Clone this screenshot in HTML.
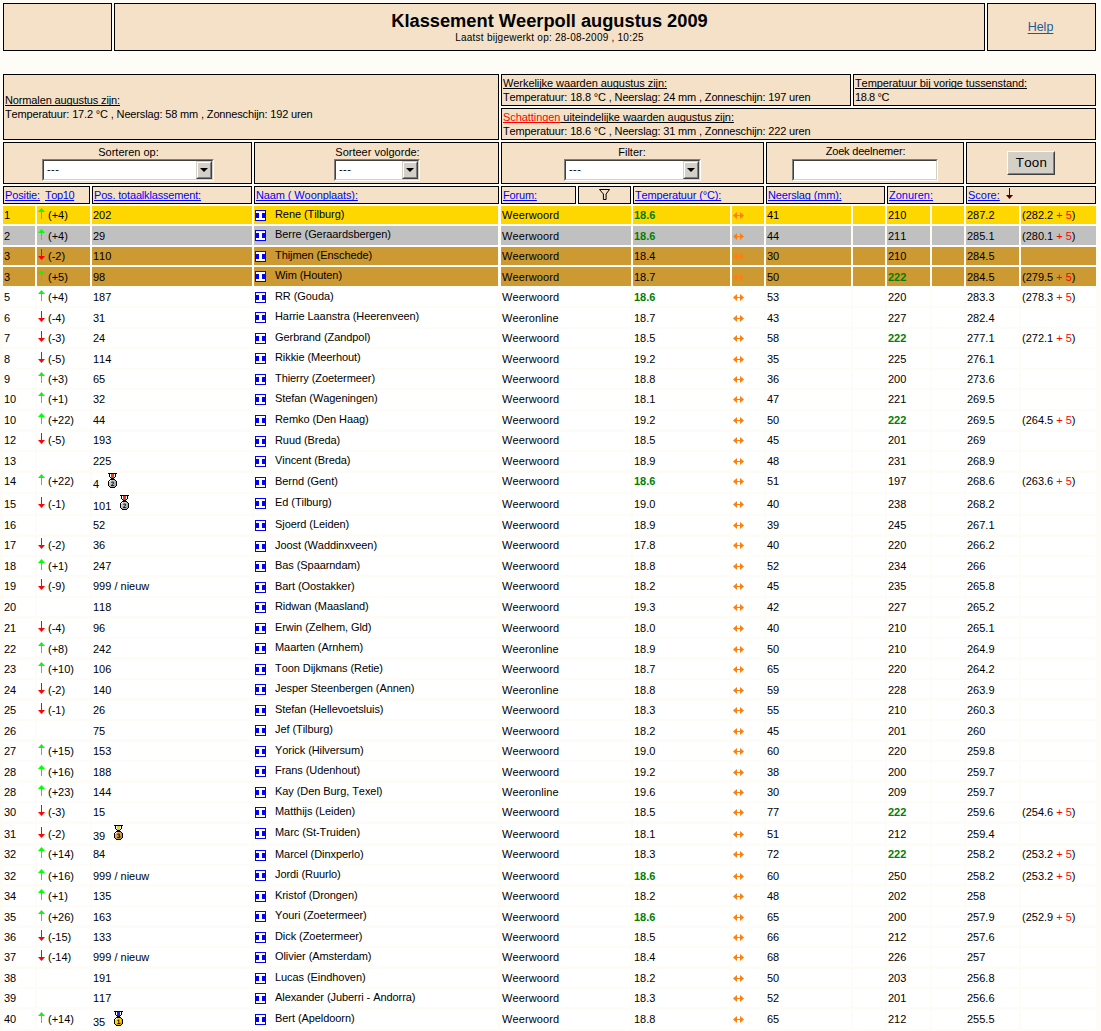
<!DOCTYPE html>
<html lang="nl"><head><meta charset="utf-8"><title>Klassement Weerpoll augustus 2009</title>
<style>
html,body{margin:0;padding:0;}
body{background:#FDFCF6;font-family:"Liberation Sans",Arial,sans-serif;font-size:11px;color:#000;font-kerning:none;}
#pg{position:relative;width:1101px;height:1031px;overflow:hidden;background:#FDFCF6;}
.b{position:absolute;box-sizing:border-box;border:1px solid #000;background:#F5E1C8;}
.t{position:absolute;white-space:nowrap;line-height:13px;}
a{color:#0000FF;text-decoration:underline;text-decoration-skip-ink:none;}
u{text-decoration:underline;text-decoration-skip-ink:none;}
.r{position:absolute;left:0;width:1101px;}
.r div{position:absolute;top:0;height:100%;background:#FFF;white-space:nowrap;overflow:hidden;box-sizing:border-box;padding-left:1px;}
.r.g div{background:#FFD700;}
.r.s div{background:#C0C0C0;}
.r.z div{background:#CC9933;}
.gr{color:#008000;font-weight:bold;}
.rd{color:#FF0000;}
svg{position:absolute;overflow:visible;}
.sel{position:absolute;box-sizing:border-box;background:#FFF;border:1px solid;border-color:#808080 #FFF #FFF #808080;}
.sel i{position:absolute;left:0;top:0;right:0;bottom:0;border:1px solid;border-color:#404040 #D4D0C8 #D4D0C8 #404040;}
.sel b{position:absolute;right:1px;top:1px;bottom:1px;width:16px;background:#D4D0C8;box-sizing:border-box;border:1px solid;border-color:#D4D0C8 #404040 #404040 #D4D0C8;}
.sel b:before{content:"";position:absolute;left:0;top:0;right:0;bottom:0;border:1px solid;border-color:#FFF #808080 #808080 #FFF;}
.sel b:after{content:"";position:absolute;left:3px;top:6px;border:4px solid transparent;border-top:4px solid #000;border-bottom:0;}
.sel span{position:absolute;left:4px;top:3px;line-height:13px;font-size:11px;letter-spacing:0.4px;}
.btn{position:absolute;box-sizing:border-box;background:#D4D0C8;border:1px solid;border-color:#FFF #404040 #404040 #FFF;font-size:13.33px;text-align:center;}
.btn:before{content:"";position:absolute;left:0;top:0;right:0;bottom:0;border:1px solid;border-color:#D4D0C8 #808080 #808080 #D4D0C8;}
</style></head><body><div id="pg">
<div class="b" style="left:3px;top:3px;width:109px;height:48px"></div>
<div class="b" style="left:114px;top:3px;width:871px;height:48px"></div>
<div class="b" style="left:987px;top:3px;width:109px;height:48px"></div>
<span class="t" style="left:114px;width:871px;text-align:center;top:10px;font-size:18.26px;font-weight:bold;line-height:21px;">Klassement Weerpoll augustus 2009</span>
<span class="t" style="left:114px;width:871px;text-align:center;top:32px;font-size:10px;line-height:12px;letter-spacing:0.24px;">Laatst bijgewerkt op: 28-08-2009 , 10:25</span>
<span class="t" style="left:987px;width:109px;text-align:center;top:20px;font-size:12.5px;line-height:15px;margin-left:-1px"><a style="color:#1E5A9E;text-underline-offset:2px">Help</a></span>
<div class="b" style="left:3px;top:74px;width:496px;height:66px"></div>
<div class="b" style="left:501px;top:74px;width:350px;height:32px"></div>
<div class="b" style="left:853px;top:74px;width:243px;height:32px"></div>
<div class="b" style="left:501px;top:108px;width:595px;height:32px"></div>
<span class="t" style="left:5px;top:94px;letter-spacing:-0.13px;"><u>Normalen augustus zijn:</u></span>
<span class="t" style="left:5px;top:108px;letter-spacing:-0.15px;">Temperatuur: 17.2 °C , Neerslag: 58 mm , Zonneschijn: 192 uren</span>
<span class="t" style="left:503px;top:77px;letter-spacing:-0.07px;"><u>Werkelijke waarden augustus zijn:</u></span>
<span class="t" style="left:503px;top:91px;letter-spacing:-0.15px;">Temperatuur: 18.8 °C , Neerslag: 24 mm , Zonneschijn: 197 uren</span>
<span class="t" style="left:855px;top:77px;letter-spacing:-0.1px;"><u>Temperatuur bij vorige tussenstand:</u></span>
<span class="t" style="left:855px;top:91px;letter-spacing:-0.4px;">18.8 °C</span>
<span class="t" style="left:503px;top:111px;letter-spacing:-0.07px;"><a style="color:#FF0000">Schattingen</a><u> uiteindelijke waarden augustus zijn:</u></span>
<span class="t" style="left:503px;top:125px;letter-spacing:-0.15px;">Temperatuur: 18.6 °C , Neerslag: 31 mm , Zonneschijn: 222 uren</span>
<div class="b" style="left:3px;top:142px;width:249px;height:42px"></div>
<div class="b" style="left:254px;top:142px;width:245px;height:42px"></div>
<div class="b" style="left:501px;top:142px;width:263px;height:42px"></div>
<div class="b" style="left:766px;top:142px;width:198px;height:42px"></div>
<div class="b" style="left:966px;top:142px;width:130px;height:42px"></div>
<span class="t" style="left:-71.5px;width:400px;text-align:center;top:146px;">Sorteren op:</span>
<span class="t" style="left:177.5px;width:400px;text-align:center;top:146px;">Sorteer volgorde:</span>
<span class="t" style="left:432px;width:400px;text-align:center;top:146px;">Filter:</span>
<span class="t" style="left:665.5px;width:400px;text-align:center;top:145px;letter-spacing:-0.2px;">Zoek deelnemer:</span>
<div class="sel" style="left:42px;top:159px;width:172px;height:22px"><i></i><span>---</span><b></b></div>
<div class="sel" style="left:334px;top:159px;width:86px;height:22px"><i></i><span>---</span><b></b></div>
<div class="sel" style="left:564px;top:159px;width:137px;height:22px"><i></i><span>---</span><b></b></div>
<div class="sel" style="left:792px;top:159px;width:146px;height:22px"><i></i></div>
<div class="btn" style="left:1007px;top:151px;width:48px;height:24px;line-height:21px;letter-spacing:0.3px;padding-left:1px">Toon</div>
<div class="b" style="left:3px;top:186px;width:87px;height:18px"></div>
<div class="b" style="left:92px;top:186px;width:160px;height:18px"></div>
<div class="b" style="left:254px;top:186px;width:245px;height:18px"></div>
<div class="b" style="left:501px;top:186px;width:75px;height:18px"></div>
<div class="b" style="left:578px;top:186px;width:53px;height:18px"></div>
<div class="b" style="left:633px;top:186px;width:131px;height:18px"></div>
<div class="b" style="left:766px;top:186px;width:119px;height:18px"></div>
<div class="b" style="left:887px;top:186px;width:77px;height:18px"></div>
<div class="b" style="left:966px;top:186px;width:130px;height:18px"></div>
<span class="t" style="left:5px;top:189px;letter-spacing:-0.13px;"><a>Positie:</a></span>
<span class="t" style="left:45px;top:189px;letter-spacing:-0.4px;"><a>Top10</a></span>
<span class="t" style="left:94px;top:189px;letter-spacing:-0.17px;"><a>Pos. totaalklassement:</a></span>
<span class="t" style="left:256px;top:189px;letter-spacing:-0.11px;"><a>Naam ( Woonplaats):</a></span>
<span class="t" style="left:503px;top:189px;letter-spacing:-0.17px;"><a>Forum:</a></span>
<span class="t" style="left:635px;top:189px;letter-spacing:-0.15px;"><a>Temperatuur (°C):</a></span>
<span class="t" style="left:768px;top:189px;letter-spacing:-0.16px;"><a>Neerslag (mm):</a></span>
<span class="t" style="left:889px;top:189px;"><a>Zonuren:</a></span>
<span class="t" style="left:968px;top:189px;"><a>Score:</a></span>
<svg style="left:1006px;top:188px" width="7" height="11" viewBox="0 0 7 11"><path d="M3.5 11L7 7H4V0H3V7H0Z" fill="#4B0000"/></svg>
<svg style="left:598px;top:188px" width="14" height="13" viewBox="0 0 14 13"><path d="M1.5 1.5H11.5L8.1 6V11.5H5.4V6Z" fill="none" stroke="#000" stroke-width="1" stroke-linejoin="miter"/></svg>
<div class="r g" style="top:206px;height:18px"><div style="left:3px;width:32px"><span class="t" style="left:1px;top:3px;">1</span></div><div style="left:37px;width:53px"><svg style="left:1px;top:2px" width="7" height="11" viewBox="0 0 7 11"><path d="M3.5 0L7 4H4V11H3V4H0Z" fill="#00FF00"/></svg><span class="t" style="left:11px;top:3px">(+4)</span></div><div style="left:92px;width:160px"><span class="t" style="left:1px;top:3px">202</span></div><div style="left:254px;width:244px"><svg style="left:1px;top:4px" width="11" height="11" viewBox="0 0 11 11"><rect width="11" height="11" fill="#0000FF"/><path d="M1 1H10V3H7V8H10V10H1V8H4V3H1Z" fill="#FFF"/></svg><span class="t" style="left:21px;top:2px;letter-spacing:-0.07px">Rene (Tilburg)</span></div><div style="left:501px;width:130px"><span class="t" style="left:1px;top:3px;letter-spacing:0.12px;">Weerwoord</span></div><div style="left:633px;width:97px"><span class="t" style="left:1px;top:3px;"><span class="gr">18.6</span></span></div><div style="left:732px;width:32px"><svg style="left:1px;top:6px" width="11" height="7" viewBox="0 0 11 7"><path d="M0 3.5L4 0V3H7V0L11 3.5L7 7V4H4V7Z" fill="#FF7F0E"/></svg></div><div style="left:766px;width:85px"><span class="t" style="left:1px;top:3px;">41</span></div><div style="left:853px;width:32px"></div><div style="left:887px;width:43px"><span class="t" style="left:1px;top:3px;">210</span></div><div style="left:932px;width:32px"></div><div style="left:966px;width:53px"><span class="t" style="left:1px;top:3px;">287.2</span></div><div style="left:1021px;width:75px"><span class="t" style="left:1px;top:3px;">(282.2 <span class="rd">+ 5</span>)</span></div></div>
<div class="r s" style="top:226px;height:19px"><div style="left:3px;width:32px"><span class="t" style="left:1px;top:4px;">2</span></div><div style="left:37px;width:53px"><svg style="left:1px;top:3px" width="7" height="11" viewBox="0 0 7 11"><path d="M3.5 0L7 4H4V11H3V4H0Z" fill="#00FF00"/></svg><span class="t" style="left:11px;top:4px">(+4)</span></div><div style="left:92px;width:160px"><span class="t" style="left:1px;top:4px">29</span></div><div style="left:254px;width:244px"><svg style="left:1px;top:4px" width="11" height="11" viewBox="0 0 11 11"><rect width="11" height="11" fill="#0000FF"/><path d="M1 1H10V3H7V8H10V10H1V8H4V3H1Z" fill="#FFF"/></svg><span class="t" style="left:21px;top:2px;letter-spacing:-0.07px">Berre (Geraardsbergen)</span></div><div style="left:501px;width:130px"><span class="t" style="left:1px;top:4px;letter-spacing:0.12px;">Weerwoord</span></div><div style="left:633px;width:97px"><span class="t" style="left:1px;top:4px;"><span class="gr">18.6</span></span></div><div style="left:732px;width:32px"><svg style="left:1px;top:7px" width="11" height="7" viewBox="0 0 11 7"><path d="M0 3.5L4 0V3H7V0L11 3.5L7 7V4H4V7Z" fill="#FF7F0E"/></svg></div><div style="left:766px;width:85px"><span class="t" style="left:1px;top:4px;">44</span></div><div style="left:853px;width:32px"></div><div style="left:887px;width:43px"><span class="t" style="left:1px;top:4px;">211</span></div><div style="left:932px;width:32px"></div><div style="left:966px;width:53px"><span class="t" style="left:1px;top:4px;">285.1</span></div><div style="left:1021px;width:75px"><span class="t" style="left:1px;top:4px;">(280.1 <span class="rd">+ 5</span>)</span></div></div>
<div class="r z" style="top:247px;height:18px"><div style="left:3px;width:32px"><span class="t" style="left:1px;top:3px;">3</span></div><div style="left:37px;width:53px"><svg style="left:1px;top:2px" width="7" height="11" viewBox="0 0 7 11"><path d="M3.5 11L7 7H4V0H3V7H0Z" fill="#FF0000"/></svg><span class="t" style="left:11px;top:3px">(-2)</span></div><div style="left:92px;width:160px"><span class="t" style="left:1px;top:3px">110</span></div><div style="left:254px;width:244px"><svg style="left:1px;top:4px" width="11" height="11" viewBox="0 0 11 11"><rect width="11" height="11" fill="#0000FF"/><path d="M1 1H10V3H7V8H10V10H1V8H4V3H1Z" fill="#FFF"/></svg><span class="t" style="left:21px;top:2px;letter-spacing:-0.07px">Thijmen (Enschede)</span></div><div style="left:501px;width:130px"><span class="t" style="left:1px;top:3px;letter-spacing:0.12px;">Weerwoord</span></div><div style="left:633px;width:97px"><span class="t" style="left:1px;top:3px;">18.4</span></div><div style="left:732px;width:32px"><svg style="left:1px;top:6px" width="11" height="7" viewBox="0 0 11 7"><path d="M0 3.5L4 0V3H7V0L11 3.5L7 7V4H4V7Z" fill="#FF7F0E"/></svg></div><div style="left:766px;width:85px"><span class="t" style="left:1px;top:3px;">30</span></div><div style="left:853px;width:32px"></div><div style="left:887px;width:43px"><span class="t" style="left:1px;top:3px;">210</span></div><div style="left:932px;width:32px"></div><div style="left:966px;width:53px"><span class="t" style="left:1px;top:3px;">284.5</span></div><div style="left:1021px;width:75px"></div></div>
<div class="r z" style="top:267px;height:19px"><div style="left:3px;width:32px"><span class="t" style="left:1px;top:4px;">3</span></div><div style="left:37px;width:53px"><svg style="left:1px;top:3px" width="7" height="11" viewBox="0 0 7 11"><path d="M3.5 0L7 4H4V11H3V4H0Z" fill="#00FF00"/></svg><span class="t" style="left:11px;top:4px">(+5)</span></div><div style="left:92px;width:160px"><span class="t" style="left:1px;top:4px">98</span></div><div style="left:254px;width:244px"><svg style="left:1px;top:4px" width="11" height="11" viewBox="0 0 11 11"><rect width="11" height="11" fill="#0000FF"/><path d="M1 1H10V3H7V8H10V10H1V8H4V3H1Z" fill="#FFF"/></svg><span class="t" style="left:21px;top:2px;letter-spacing:-0.07px">Wim (Houten)</span></div><div style="left:501px;width:130px"><span class="t" style="left:1px;top:4px;letter-spacing:0.12px;">Weerwoord</span></div><div style="left:633px;width:97px"><span class="t" style="left:1px;top:4px;">18.7</span></div><div style="left:732px;width:32px"><svg style="left:1px;top:7px" width="11" height="7" viewBox="0 0 11 7"><path d="M0 3.5L4 0V3H7V0L11 3.5L7 7V4H4V7Z" fill="#FF7F0E"/></svg></div><div style="left:766px;width:85px"><span class="t" style="left:1px;top:4px;">50</span></div><div style="left:853px;width:32px"></div><div style="left:887px;width:43px"><span class="t" style="left:1px;top:4px;"><span class="gr">222</span></span></div><div style="left:932px;width:32px"></div><div style="left:966px;width:53px"><span class="t" style="left:1px;top:4px;">284.5</span></div><div style="left:1021px;width:75px"><span class="t" style="left:1px;top:4px;">(279.5 <span class="rd">+ 5</span>)</span></div></div>
<div class="r" style="top:288px;height:18px"><div style="left:3px;width:32px"><span class="t" style="left:1px;top:3px;">5</span></div><div style="left:37px;width:53px"><svg style="left:1px;top:2px" width="7" height="11" viewBox="0 0 7 11"><path d="M3.5 0L7 4H4V11H3V4H0Z" fill="#00FF00"/></svg><span class="t" style="left:11px;top:3px">(+4)</span></div><div style="left:92px;width:160px"><span class="t" style="left:1px;top:3px">187</span></div><div style="left:254px;width:244px"><svg style="left:1px;top:4px" width="11" height="11" viewBox="0 0 11 11"><rect width="11" height="11" fill="#0000FF"/><path d="M1 1H10V3H7V8H10V10H1V8H4V3H1Z" fill="#FFF"/></svg><span class="t" style="left:21px;top:2px;letter-spacing:-0.07px">RR (Gouda)</span></div><div style="left:501px;width:130px"><span class="t" style="left:1px;top:3px;letter-spacing:0.12px;">Weerwoord</span></div><div style="left:633px;width:97px"><span class="t" style="left:1px;top:3px;"><span class="gr">18.6</span></span></div><div style="left:732px;width:32px"><svg style="left:1px;top:6px" width="11" height="7" viewBox="0 0 11 7"><path d="M0 3.5L4 0V3H7V0L11 3.5L7 7V4H4V7Z" fill="#FF7F0E"/></svg></div><div style="left:766px;width:85px"><span class="t" style="left:1px;top:3px;">53</span></div><div style="left:853px;width:32px"></div><div style="left:887px;width:43px"><span class="t" style="left:1px;top:3px;">220</span></div><div style="left:932px;width:32px"></div><div style="left:966px;width:53px"><span class="t" style="left:1px;top:3px;">283.3</span></div><div style="left:1021px;width:75px"><span class="t" style="left:1px;top:3px;">(278.3 <span class="rd">+ 5</span>)</span></div></div>
<div class="r" style="top:308px;height:19px"><div style="left:3px;width:32px"><span class="t" style="left:1px;top:4px;">6</span></div><div style="left:37px;width:53px"><svg style="left:1px;top:3px" width="7" height="11" viewBox="0 0 7 11"><path d="M3.5 11L7 7H4V0H3V7H0Z" fill="#FF0000"/></svg><span class="t" style="left:11px;top:4px">(-4)</span></div><div style="left:92px;width:160px"><span class="t" style="left:1px;top:4px">31</span></div><div style="left:254px;width:244px"><svg style="left:1px;top:4px" width="11" height="11" viewBox="0 0 11 11"><rect width="11" height="11" fill="#0000FF"/><path d="M1 1H10V3H7V8H10V10H1V8H4V3H1Z" fill="#FFF"/></svg><span class="t" style="left:21px;top:2px;letter-spacing:-0.07px">Harrie Laanstra (Heerenveen)</span></div><div style="left:501px;width:130px"><span class="t" style="left:1px;top:4px;letter-spacing:0.12px;">Weeronline</span></div><div style="left:633px;width:97px"><span class="t" style="left:1px;top:4px;">18.7</span></div><div style="left:732px;width:32px"><svg style="left:1px;top:7px" width="11" height="7" viewBox="0 0 11 7"><path d="M0 3.5L4 0V3H7V0L11 3.5L7 7V4H4V7Z" fill="#FF7F0E"/></svg></div><div style="left:766px;width:85px"><span class="t" style="left:1px;top:4px;">43</span></div><div style="left:853px;width:32px"></div><div style="left:887px;width:43px"><span class="t" style="left:1px;top:4px;">227</span></div><div style="left:932px;width:32px"></div><div style="left:966px;width:53px"><span class="t" style="left:1px;top:4px;">282.4</span></div><div style="left:1021px;width:75px"></div></div>
<div class="r" style="top:329px;height:18px"><div style="left:3px;width:32px"><span class="t" style="left:1px;top:3px;">7</span></div><div style="left:37px;width:53px"><svg style="left:1px;top:2px" width="7" height="11" viewBox="0 0 7 11"><path d="M3.5 11L7 7H4V0H3V7H0Z" fill="#FF0000"/></svg><span class="t" style="left:11px;top:3px">(-3)</span></div><div style="left:92px;width:160px"><span class="t" style="left:1px;top:3px">24</span></div><div style="left:254px;width:244px"><svg style="left:1px;top:4px" width="11" height="11" viewBox="0 0 11 11"><rect width="11" height="11" fill="#0000FF"/><path d="M1 1H10V3H7V8H10V10H1V8H4V3H1Z" fill="#FFF"/></svg><span class="t" style="left:21px;top:2px;letter-spacing:-0.07px">Gerbrand (Zandpol)</span></div><div style="left:501px;width:130px"><span class="t" style="left:1px;top:3px;letter-spacing:0.12px;">Weerwoord</span></div><div style="left:633px;width:97px"><span class="t" style="left:1px;top:3px;">18.5</span></div><div style="left:732px;width:32px"><svg style="left:1px;top:6px" width="11" height="7" viewBox="0 0 11 7"><path d="M0 3.5L4 0V3H7V0L11 3.5L7 7V4H4V7Z" fill="#FF7F0E"/></svg></div><div style="left:766px;width:85px"><span class="t" style="left:1px;top:3px;">58</span></div><div style="left:853px;width:32px"></div><div style="left:887px;width:43px"><span class="t" style="left:1px;top:3px;"><span class="gr">222</span></span></div><div style="left:932px;width:32px"></div><div style="left:966px;width:53px"><span class="t" style="left:1px;top:3px;">277.1</span></div><div style="left:1021px;width:75px"><span class="t" style="left:1px;top:3px;">(272.1 <span class="rd">+ 5</span>)</span></div></div>
<div class="r" style="top:349px;height:19px"><div style="left:3px;width:32px"><span class="t" style="left:1px;top:4px;">8</span></div><div style="left:37px;width:53px"><svg style="left:1px;top:3px" width="7" height="11" viewBox="0 0 7 11"><path d="M3.5 11L7 7H4V0H3V7H0Z" fill="#FF0000"/></svg><span class="t" style="left:11px;top:4px">(-5)</span></div><div style="left:92px;width:160px"><span class="t" style="left:1px;top:4px">114</span></div><div style="left:254px;width:244px"><svg style="left:1px;top:4px" width="11" height="11" viewBox="0 0 11 11"><rect width="11" height="11" fill="#0000FF"/><path d="M1 1H10V3H7V8H10V10H1V8H4V3H1Z" fill="#FFF"/></svg><span class="t" style="left:21px;top:2px;letter-spacing:-0.07px">Rikkie (Meerhout)</span></div><div style="left:501px;width:130px"><span class="t" style="left:1px;top:4px;letter-spacing:0.12px;">Weerwoord</span></div><div style="left:633px;width:97px"><span class="t" style="left:1px;top:4px;">19.2</span></div><div style="left:732px;width:32px"><svg style="left:1px;top:7px" width="11" height="7" viewBox="0 0 11 7"><path d="M0 3.5L4 0V3H7V0L11 3.5L7 7V4H4V7Z" fill="#FF7F0E"/></svg></div><div style="left:766px;width:85px"><span class="t" style="left:1px;top:4px;">35</span></div><div style="left:853px;width:32px"></div><div style="left:887px;width:43px"><span class="t" style="left:1px;top:4px;">225</span></div><div style="left:932px;width:32px"></div><div style="left:966px;width:53px"><span class="t" style="left:1px;top:4px;">276.1</span></div><div style="left:1021px;width:75px"></div></div>
<div class="r" style="top:370px;height:18px"><div style="left:3px;width:32px"><span class="t" style="left:1px;top:3px;">9</span></div><div style="left:37px;width:53px"><svg style="left:1px;top:2px" width="7" height="11" viewBox="0 0 7 11"><path d="M3.5 0L7 4H4V11H3V4H0Z" fill="#00FF00"/></svg><span class="t" style="left:11px;top:3px">(+3)</span></div><div style="left:92px;width:160px"><span class="t" style="left:1px;top:3px">65</span></div><div style="left:254px;width:244px"><svg style="left:1px;top:4px" width="11" height="11" viewBox="0 0 11 11"><rect width="11" height="11" fill="#0000FF"/><path d="M1 1H10V3H7V8H10V10H1V8H4V3H1Z" fill="#FFF"/></svg><span class="t" style="left:21px;top:2px;letter-spacing:-0.07px">Thierry (Zoetermeer)</span></div><div style="left:501px;width:130px"><span class="t" style="left:1px;top:3px;letter-spacing:0.12px;">Weerwoord</span></div><div style="left:633px;width:97px"><span class="t" style="left:1px;top:3px;">18.8</span></div><div style="left:732px;width:32px"><svg style="left:1px;top:6px" width="11" height="7" viewBox="0 0 11 7"><path d="M0 3.5L4 0V3H7V0L11 3.5L7 7V4H4V7Z" fill="#FF7F0E"/></svg></div><div style="left:766px;width:85px"><span class="t" style="left:1px;top:3px;">36</span></div><div style="left:853px;width:32px"></div><div style="left:887px;width:43px"><span class="t" style="left:1px;top:3px;">200</span></div><div style="left:932px;width:32px"></div><div style="left:966px;width:53px"><span class="t" style="left:1px;top:3px;">273.6</span></div><div style="left:1021px;width:75px"></div></div>
<div class="r" style="top:390px;height:19px"><div style="left:3px;width:32px"><span class="t" style="left:1px;top:3px;">10</span></div><div style="left:37px;width:53px"><svg style="left:1px;top:2px" width="7" height="11" viewBox="0 0 7 11"><path d="M3.5 0L7 4H4V11H3V4H0Z" fill="#00FF00"/></svg><span class="t" style="left:11px;top:3px">(+1)</span></div><div style="left:92px;width:160px"><span class="t" style="left:1px;top:3px">32</span></div><div style="left:254px;width:244px"><svg style="left:1px;top:4px" width="11" height="11" viewBox="0 0 11 11"><rect width="11" height="11" fill="#0000FF"/><path d="M1 1H10V3H7V8H10V10H1V8H4V3H1Z" fill="#FFF"/></svg><span class="t" style="left:21px;top:2px;letter-spacing:-0.07px">Stefan (Wageningen)</span></div><div style="left:501px;width:130px"><span class="t" style="left:1px;top:3px;letter-spacing:0.12px;">Weerwoord</span></div><div style="left:633px;width:97px"><span class="t" style="left:1px;top:3px;">18.1</span></div><div style="left:732px;width:32px"><svg style="left:1px;top:6px" width="11" height="7" viewBox="0 0 11 7"><path d="M0 3.5L4 0V3H7V0L11 3.5L7 7V4H4V7Z" fill="#FF7F0E"/></svg></div><div style="left:766px;width:85px"><span class="t" style="left:1px;top:3px;">47</span></div><div style="left:853px;width:32px"></div><div style="left:887px;width:43px"><span class="t" style="left:1px;top:3px;">221</span></div><div style="left:932px;width:32px"></div><div style="left:966px;width:53px"><span class="t" style="left:1px;top:3px;">269.5</span></div><div style="left:1021px;width:75px"></div></div>
<div class="r" style="top:411px;height:18px"><div style="left:3px;width:32px"><span class="t" style="left:1px;top:3px;">10</span></div><div style="left:37px;width:53px"><svg style="left:1px;top:2px" width="7" height="11" viewBox="0 0 7 11"><path d="M3.5 0L7 4H4V11H3V4H0Z" fill="#00FF00"/></svg><span class="t" style="left:11px;top:3px">(+22)</span></div><div style="left:92px;width:160px"><span class="t" style="left:1px;top:3px">44</span></div><div style="left:254px;width:244px"><svg style="left:1px;top:4px" width="11" height="11" viewBox="0 0 11 11"><rect width="11" height="11" fill="#0000FF"/><path d="M1 1H10V3H7V8H10V10H1V8H4V3H1Z" fill="#FFF"/></svg><span class="t" style="left:21px;top:2px;letter-spacing:-0.07px">Remko (Den Haag)</span></div><div style="left:501px;width:130px"><span class="t" style="left:1px;top:3px;letter-spacing:0.12px;">Weerwoord</span></div><div style="left:633px;width:97px"><span class="t" style="left:1px;top:3px;">19.2</span></div><div style="left:732px;width:32px"><svg style="left:1px;top:6px" width="11" height="7" viewBox="0 0 11 7"><path d="M0 3.5L4 0V3H7V0L11 3.5L7 7V4H4V7Z" fill="#FF7F0E"/></svg></div><div style="left:766px;width:85px"><span class="t" style="left:1px;top:3px;">50</span></div><div style="left:853px;width:32px"></div><div style="left:887px;width:43px"><span class="t" style="left:1px;top:3px;"><span class="gr">222</span></span></div><div style="left:932px;width:32px"></div><div style="left:966px;width:53px"><span class="t" style="left:1px;top:3px;">269.5</span></div><div style="left:1021px;width:75px"><span class="t" style="left:1px;top:3px;">(264.5 <span class="rd">+ 5</span>)</span></div></div>
<div class="r" style="top:432px;height:18px"><div style="left:3px;width:32px"><span class="t" style="left:1px;top:2px;">12</span></div><div style="left:37px;width:53px"><svg style="left:1px;top:1px" width="7" height="11" viewBox="0 0 7 11"><path d="M3.5 11L7 7H4V0H3V7H0Z" fill="#FF0000"/></svg><span class="t" style="left:11px;top:2px">(-5)</span></div><div style="left:92px;width:160px"><span class="t" style="left:1px;top:2px">193</span></div><div style="left:254px;width:244px"><svg style="left:1px;top:4px" width="11" height="11" viewBox="0 0 11 11"><rect width="11" height="11" fill="#0000FF"/><path d="M1 1H10V3H7V8H10V10H1V8H4V3H1Z" fill="#FFF"/></svg><span class="t" style="left:21px;top:2px;letter-spacing:-0.07px">Ruud (Breda)</span></div><div style="left:501px;width:130px"><span class="t" style="left:1px;top:2px;letter-spacing:0.12px;">Weerwoord</span></div><div style="left:633px;width:97px"><span class="t" style="left:1px;top:2px;">18.5</span></div><div style="left:732px;width:32px"><svg style="left:1px;top:5px" width="11" height="7" viewBox="0 0 11 7"><path d="M0 3.5L4 0V3H7V0L11 3.5L7 7V4H4V7Z" fill="#FF7F0E"/></svg></div><div style="left:766px;width:85px"><span class="t" style="left:1px;top:2px;">45</span></div><div style="left:853px;width:32px"></div><div style="left:887px;width:43px"><span class="t" style="left:1px;top:2px;">201</span></div><div style="left:932px;width:32px"></div><div style="left:966px;width:53px"><span class="t" style="left:1px;top:2px;">269</span></div><div style="left:1021px;width:75px"></div></div>
<div class="r" style="top:452px;height:18px"><div style="left:3px;width:32px"><span class="t" style="left:1px;top:3px;">13</span></div><div style="left:37px;width:53px"></div><div style="left:92px;width:160px"><span class="t" style="left:1px;top:3px">225</span></div><div style="left:254px;width:244px"><svg style="left:1px;top:4px" width="11" height="11" viewBox="0 0 11 11"><rect width="11" height="11" fill="#0000FF"/><path d="M1 1H10V3H7V8H10V10H1V8H4V3H1Z" fill="#FFF"/></svg><span class="t" style="left:21px;top:2px;letter-spacing:-0.07px">Vincent (Breda)</span></div><div style="left:501px;width:130px"><span class="t" style="left:1px;top:3px;letter-spacing:0.12px;">Weerwoord</span></div><div style="left:633px;width:97px"><span class="t" style="left:1px;top:3px;">18.9</span></div><div style="left:732px;width:32px"><svg style="left:1px;top:6px" width="11" height="7" viewBox="0 0 11 7"><path d="M0 3.5L4 0V3H7V0L11 3.5L7 7V4H4V7Z" fill="#FF7F0E"/></svg></div><div style="left:766px;width:85px"><span class="t" style="left:1px;top:3px;">48</span></div><div style="left:853px;width:32px"></div><div style="left:887px;width:43px"><span class="t" style="left:1px;top:3px;">231</span></div><div style="left:932px;width:32px"></div><div style="left:966px;width:53px"><span class="t" style="left:1px;top:3px;">268.9</span></div><div style="left:1021px;width:75px"></div></div>
<div class="r" style="top:473px;height:19px"><div style="left:3px;width:32px"><span class="t" style="left:1px;top:2px;">14</span></div><div style="left:37px;width:53px"><svg style="left:1px;top:1px" width="7" height="11" viewBox="0 0 7 11"><path d="M3.5 0L7 4H4V11H3V4H0Z" fill="#00FF00"/></svg><span class="t" style="left:11px;top:2px">(+22)</span></div><div style="left:92px;width:160px"><span class="t" style="left:1px;top:5px">4</span><svg style="left:16px;top:0px" width="9" height="15" viewBox="0 0 9 15" shape-rendering="crispEdges"><rect x="0" y="0" width="9" height="1" fill="#000"/><rect x="1" y="1" width="1" height="1" fill="#000"/><rect x="2" y="1" width="1" height="1" fill="#FFF"/><rect x="3" y="1" width="3" height="1" fill="#FF3300"/><rect x="6" y="1" width="1" height="1" fill="#FFF"/><rect x="7" y="1" width="1" height="1" fill="#000"/><rect x="1" y="2" width="1" height="1" fill="#000"/><rect x="2" y="2" width="1" height="1" fill="#FFF"/><rect x="3" y="2" width="3" height="1" fill="#FF3300"/><rect x="6" y="2" width="1" height="1" fill="#FFF"/><rect x="7" y="2" width="1" height="1" fill="#000"/><rect x="1" y="3" width="1" height="1" fill="#000"/><rect x="2" y="3" width="1" height="1" fill="#FFF"/><rect x="3" y="3" width="3" height="1" fill="#FF3300"/><rect x="6" y="3" width="1" height="1" fill="#FFF"/><rect x="7" y="3" width="1" height="1" fill="#000"/><rect x="2" y="4" width="1" height="1" fill="#000"/><rect x="3" y="4" width="3" height="1" fill="#FF3300"/><rect x="6" y="4" width="1" height="1" fill="#000"/><rect x="3" y="5" width="3" height="1" fill="#000"/><rect x="2" y="6" width="5" height="1" fill="#000"/><rect x="1" y="7" width="1" height="1" fill="#000"/><rect x="2" y="7" width="1" height="1" fill="#FFF"/><rect x="3" y="7" width="3" height="1" fill="#C8C8C8"/><rect x="6" y="7" width="1" height="1" fill="#A8A8A8"/><rect x="7" y="7" width="1" height="1" fill="#000"/><rect x="0" y="8" width="1" height="1" fill="#000"/><rect x="1" y="8" width="1" height="1" fill="#FFF"/><rect x="2" y="8" width="5" height="1" fill="#C8C8C8"/><rect x="7" y="8" width="1" height="1" fill="#A8A8A8"/><rect x="8" y="8" width="1" height="1" fill="#000"/><rect x="0" y="9" width="1" height="1" fill="#000"/><rect x="1" y="9" width="6" height="1" fill="#C8C8C8"/><rect x="7" y="9" width="1" height="1" fill="#A8A8A8"/><rect x="8" y="9" width="1" height="1" fill="#000"/><rect x="0" y="10" width="1" height="1" fill="#000"/><rect x="1" y="10" width="6" height="1" fill="#C8C8C8"/><rect x="7" y="10" width="1" height="1" fill="#A8A8A8"/><rect x="8" y="10" width="1" height="1" fill="#000"/><rect x="0" y="11" width="1" height="1" fill="#000"/><rect x="1" y="11" width="5" height="1" fill="#C8C8C8"/><rect x="6" y="11" width="2" height="1" fill="#A8A8A8"/><rect x="8" y="11" width="1" height="1" fill="#000"/><rect x="0" y="12" width="1" height="1" fill="#000"/><rect x="1" y="12" width="4" height="1" fill="#C8C8C8"/><rect x="5" y="12" width="3" height="1" fill="#A8A8A8"/><rect x="8" y="12" width="1" height="1" fill="#000"/><rect x="1" y="13" width="1" height="1" fill="#000"/><rect x="2" y="13" width="5" height="1" fill="#A8A8A8"/><rect x="7" y="13" width="1" height="1" fill="#000"/><rect x="2" y="14" width="5" height="1" fill="#000"/><text x="4.6" y="12.6" font-size="6.4" font-weight="bold" text-anchor="middle" font-family="Liberation Sans,sans-serif" fill="#000" style="text-rendering:geometricPrecision">2</text></svg></div><div style="left:254px;width:244px"><svg style="left:1px;top:4px" width="11" height="11" viewBox="0 0 11 11"><rect width="11" height="11" fill="#0000FF"/><path d="M1 1H10V3H7V8H10V10H1V8H4V3H1Z" fill="#FFF"/></svg><span class="t" style="left:21px;top:2px;letter-spacing:-0.07px">Bernd (Gent)</span></div><div style="left:501px;width:130px"><span class="t" style="left:1px;top:2px;letter-spacing:0.12px;">Weerwoord</span></div><div style="left:633px;width:97px"><span class="t" style="left:1px;top:2px;"><span class="gr">18.6</span></span></div><div style="left:732px;width:32px"><svg style="left:1px;top:5px" width="11" height="7" viewBox="0 0 11 7"><path d="M0 3.5L4 0V3H7V0L11 3.5L7 7V4H4V7Z" fill="#FF7F0E"/></svg></div><div style="left:766px;width:85px"><span class="t" style="left:1px;top:2px;">51</span></div><div style="left:853px;width:32px"></div><div style="left:887px;width:43px"><span class="t" style="left:1px;top:2px;">197</span></div><div style="left:932px;width:32px"></div><div style="left:966px;width:53px"><span class="t" style="left:1px;top:2px;">268.6</span></div><div style="left:1021px;width:75px"><span class="t" style="left:1px;top:2px;">(263.6 <span class="rd">+ 5</span>)</span></div></div>
<div class="r" style="top:494px;height:20px"><div style="left:3px;width:32px"><span class="t" style="left:1px;top:4px;">15</span></div><div style="left:37px;width:53px"><svg style="left:1px;top:3px" width="7" height="11" viewBox="0 0 7 11"><path d="M3.5 11L7 7H4V0H3V7H0Z" fill="#FF0000"/></svg><span class="t" style="left:11px;top:4px">(-1)</span></div><div style="left:92px;width:160px"><span class="t" style="left:1px;top:6px">101</span><svg style="left:28px;top:1px" width="9" height="15" viewBox="0 0 9 15" shape-rendering="crispEdges"><rect x="0" y="0" width="9" height="1" fill="#000"/><rect x="1" y="1" width="1" height="1" fill="#000"/><rect x="2" y="1" width="1" height="1" fill="#FFF"/><rect x="3" y="1" width="3" height="1" fill="#FF3300"/><rect x="6" y="1" width="1" height="1" fill="#FFF"/><rect x="7" y="1" width="1" height="1" fill="#000"/><rect x="1" y="2" width="1" height="1" fill="#000"/><rect x="2" y="2" width="1" height="1" fill="#FFF"/><rect x="3" y="2" width="3" height="1" fill="#FF3300"/><rect x="6" y="2" width="1" height="1" fill="#FFF"/><rect x="7" y="2" width="1" height="1" fill="#000"/><rect x="1" y="3" width="1" height="1" fill="#000"/><rect x="2" y="3" width="1" height="1" fill="#FFF"/><rect x="3" y="3" width="3" height="1" fill="#FF3300"/><rect x="6" y="3" width="1" height="1" fill="#FFF"/><rect x="7" y="3" width="1" height="1" fill="#000"/><rect x="2" y="4" width="1" height="1" fill="#000"/><rect x="3" y="4" width="3" height="1" fill="#FF3300"/><rect x="6" y="4" width="1" height="1" fill="#000"/><rect x="3" y="5" width="3" height="1" fill="#000"/><rect x="2" y="6" width="5" height="1" fill="#000"/><rect x="1" y="7" width="1" height="1" fill="#000"/><rect x="2" y="7" width="1" height="1" fill="#FFF"/><rect x="3" y="7" width="3" height="1" fill="#C8C8C8"/><rect x="6" y="7" width="1" height="1" fill="#A8A8A8"/><rect x="7" y="7" width="1" height="1" fill="#000"/><rect x="0" y="8" width="1" height="1" fill="#000"/><rect x="1" y="8" width="1" height="1" fill="#FFF"/><rect x="2" y="8" width="5" height="1" fill="#C8C8C8"/><rect x="7" y="8" width="1" height="1" fill="#A8A8A8"/><rect x="8" y="8" width="1" height="1" fill="#000"/><rect x="0" y="9" width="1" height="1" fill="#000"/><rect x="1" y="9" width="6" height="1" fill="#C8C8C8"/><rect x="7" y="9" width="1" height="1" fill="#A8A8A8"/><rect x="8" y="9" width="1" height="1" fill="#000"/><rect x="0" y="10" width="1" height="1" fill="#000"/><rect x="1" y="10" width="6" height="1" fill="#C8C8C8"/><rect x="7" y="10" width="1" height="1" fill="#A8A8A8"/><rect x="8" y="10" width="1" height="1" fill="#000"/><rect x="0" y="11" width="1" height="1" fill="#000"/><rect x="1" y="11" width="5" height="1" fill="#C8C8C8"/><rect x="6" y="11" width="2" height="1" fill="#A8A8A8"/><rect x="8" y="11" width="1" height="1" fill="#000"/><rect x="0" y="12" width="1" height="1" fill="#000"/><rect x="1" y="12" width="4" height="1" fill="#C8C8C8"/><rect x="5" y="12" width="3" height="1" fill="#A8A8A8"/><rect x="8" y="12" width="1" height="1" fill="#000"/><rect x="1" y="13" width="1" height="1" fill="#000"/><rect x="2" y="13" width="5" height="1" fill="#A8A8A8"/><rect x="7" y="13" width="1" height="1" fill="#000"/><rect x="2" y="14" width="5" height="1" fill="#000"/><text x="4.6" y="12.6" font-size="6.4" font-weight="bold" text-anchor="middle" font-family="Liberation Sans,sans-serif" fill="#000" style="text-rendering:geometricPrecision">2</text></svg></div><div style="left:254px;width:244px"><svg style="left:1px;top:4px" width="11" height="11" viewBox="0 0 11 11"><rect width="11" height="11" fill="#0000FF"/><path d="M1 1H10V3H7V8H10V10H1V8H4V3H1Z" fill="#FFF"/></svg><span class="t" style="left:21px;top:2px;letter-spacing:-0.07px">Ed (Tilburg)</span></div><div style="left:501px;width:130px"><span class="t" style="left:1px;top:4px;letter-spacing:0.12px;">Weerwoord</span></div><div style="left:633px;width:97px"><span class="t" style="left:1px;top:4px;">19.0</span></div><div style="left:732px;width:32px"><svg style="left:1px;top:7px" width="11" height="7" viewBox="0 0 11 7"><path d="M0 3.5L4 0V3H7V0L11 3.5L7 7V4H4V7Z" fill="#FF7F0E"/></svg></div><div style="left:766px;width:85px"><span class="t" style="left:1px;top:4px;">40</span></div><div style="left:853px;width:32px"></div><div style="left:887px;width:43px"><span class="t" style="left:1px;top:4px;">238</span></div><div style="left:932px;width:32px"></div><div style="left:966px;width:53px"><span class="t" style="left:1px;top:4px;">268.2</span></div><div style="left:1021px;width:75px"></div></div>
<div class="r" style="top:516px;height:18px"><div style="left:3px;width:32px"><span class="t" style="left:1px;top:3px;">16</span></div><div style="left:37px;width:53px"></div><div style="left:92px;width:160px"><span class="t" style="left:1px;top:3px">52</span></div><div style="left:254px;width:244px"><svg style="left:1px;top:4px" width="11" height="11" viewBox="0 0 11 11"><rect width="11" height="11" fill="#0000FF"/><path d="M1 1H10V3H7V8H10V10H1V8H4V3H1Z" fill="#FFF"/></svg><span class="t" style="left:21px;top:2px;letter-spacing:-0.07px">Sjoerd (Leiden)</span></div><div style="left:501px;width:130px"><span class="t" style="left:1px;top:3px;letter-spacing:0.12px;">Weerwoord</span></div><div style="left:633px;width:97px"><span class="t" style="left:1px;top:3px;">18.9</span></div><div style="left:732px;width:32px"><svg style="left:1px;top:6px" width="11" height="7" viewBox="0 0 11 7"><path d="M0 3.5L4 0V3H7V0L11 3.5L7 7V4H4V7Z" fill="#FF7F0E"/></svg></div><div style="left:766px;width:85px"><span class="t" style="left:1px;top:3px;">39</span></div><div style="left:853px;width:32px"></div><div style="left:887px;width:43px"><span class="t" style="left:1px;top:3px;">245</span></div><div style="left:932px;width:32px"></div><div style="left:966px;width:53px"><span class="t" style="left:1px;top:3px;">267.1</span></div><div style="left:1021px;width:75px"></div></div>
<div class="r" style="top:537px;height:18px"><div style="left:3px;width:32px"><span class="t" style="left:1px;top:2px;">17</span></div><div style="left:37px;width:53px"><svg style="left:1px;top:1px" width="7" height="11" viewBox="0 0 7 11"><path d="M3.5 11L7 7H4V0H3V7H0Z" fill="#FF0000"/></svg><span class="t" style="left:11px;top:2px">(-2)</span></div><div style="left:92px;width:160px"><span class="t" style="left:1px;top:2px">36</span></div><div style="left:254px;width:244px"><svg style="left:1px;top:4px" width="11" height="11" viewBox="0 0 11 11"><rect width="11" height="11" fill="#0000FF"/><path d="M1 1H10V3H7V8H10V10H1V8H4V3H1Z" fill="#FFF"/></svg><span class="t" style="left:21px;top:2px;letter-spacing:-0.07px">Joost (Waddinxveen)</span></div><div style="left:501px;width:130px"><span class="t" style="left:1px;top:2px;letter-spacing:0.12px;">Weerwoord</span></div><div style="left:633px;width:97px"><span class="t" style="left:1px;top:2px;">17.8</span></div><div style="left:732px;width:32px"><svg style="left:1px;top:5px" width="11" height="7" viewBox="0 0 11 7"><path d="M0 3.5L4 0V3H7V0L11 3.5L7 7V4H4V7Z" fill="#FF7F0E"/></svg></div><div style="left:766px;width:85px"><span class="t" style="left:1px;top:2px;">40</span></div><div style="left:853px;width:32px"></div><div style="left:887px;width:43px"><span class="t" style="left:1px;top:2px;">220</span></div><div style="left:932px;width:32px"></div><div style="left:966px;width:53px"><span class="t" style="left:1px;top:2px;">266.2</span></div><div style="left:1021px;width:75px"></div></div>
<div class="r" style="top:557px;height:18px"><div style="left:3px;width:32px"><span class="t" style="left:1px;top:3px;">18</span></div><div style="left:37px;width:53px"><svg style="left:1px;top:2px" width="7" height="11" viewBox="0 0 7 11"><path d="M3.5 0L7 4H4V11H3V4H0Z" fill="#00FF00"/></svg><span class="t" style="left:11px;top:3px">(+1)</span></div><div style="left:92px;width:160px"><span class="t" style="left:1px;top:3px">247</span></div><div style="left:254px;width:244px"><svg style="left:1px;top:4px" width="11" height="11" viewBox="0 0 11 11"><rect width="11" height="11" fill="#0000FF"/><path d="M1 1H10V3H7V8H10V10H1V8H4V3H1Z" fill="#FFF"/></svg><span class="t" style="left:21px;top:2px;letter-spacing:-0.07px">Bas (Spaarndam)</span></div><div style="left:501px;width:130px"><span class="t" style="left:1px;top:3px;letter-spacing:0.12px;">Weerwoord</span></div><div style="left:633px;width:97px"><span class="t" style="left:1px;top:3px;">18.8</span></div><div style="left:732px;width:32px"><svg style="left:1px;top:6px" width="11" height="7" viewBox="0 0 11 7"><path d="M0 3.5L4 0V3H7V0L11 3.5L7 7V4H4V7Z" fill="#FF7F0E"/></svg></div><div style="left:766px;width:85px"><span class="t" style="left:1px;top:3px;">52</span></div><div style="left:853px;width:32px"></div><div style="left:887px;width:43px"><span class="t" style="left:1px;top:3px;">234</span></div><div style="left:932px;width:32px"></div><div style="left:966px;width:53px"><span class="t" style="left:1px;top:3px;">266</span></div><div style="left:1021px;width:75px"></div></div>
<div class="r" style="top:578px;height:18px"><div style="left:3px;width:32px"><span class="t" style="left:1px;top:2px;">19</span></div><div style="left:37px;width:53px"><svg style="left:1px;top:1px" width="7" height="11" viewBox="0 0 7 11"><path d="M3.5 11L7 7H4V0H3V7H0Z" fill="#FF0000"/></svg><span class="t" style="left:11px;top:2px">(-9)</span></div><div style="left:92px;width:160px"><span class="t" style="left:1px;top:2px">999 / nieuw</span></div><div style="left:254px;width:244px"><svg style="left:1px;top:4px" width="11" height="11" viewBox="0 0 11 11"><rect width="11" height="11" fill="#0000FF"/><path d="M1 1H10V3H7V8H10V10H1V8H4V3H1Z" fill="#FFF"/></svg><span class="t" style="left:21px;top:2px;letter-spacing:-0.07px">Bart (Oostakker)</span></div><div style="left:501px;width:130px"><span class="t" style="left:1px;top:2px;letter-spacing:0.12px;">Weerwoord</span></div><div style="left:633px;width:97px"><span class="t" style="left:1px;top:2px;">18.2</span></div><div style="left:732px;width:32px"><svg style="left:1px;top:5px" width="11" height="7" viewBox="0 0 11 7"><path d="M0 3.5L4 0V3H7V0L11 3.5L7 7V4H4V7Z" fill="#FF7F0E"/></svg></div><div style="left:766px;width:85px"><span class="t" style="left:1px;top:2px;">45</span></div><div style="left:853px;width:32px"></div><div style="left:887px;width:43px"><span class="t" style="left:1px;top:2px;">235</span></div><div style="left:932px;width:32px"></div><div style="left:966px;width:53px"><span class="t" style="left:1px;top:2px;">265.8</span></div><div style="left:1021px;width:75px"></div></div>
<div class="r" style="top:598px;height:18px"><div style="left:3px;width:32px"><span class="t" style="left:1px;top:3px;">20</span></div><div style="left:37px;width:53px"></div><div style="left:92px;width:160px"><span class="t" style="left:1px;top:3px">118</span></div><div style="left:254px;width:244px"><svg style="left:1px;top:4px" width="11" height="11" viewBox="0 0 11 11"><rect width="11" height="11" fill="#0000FF"/><path d="M1 1H10V3H7V8H10V10H1V8H4V3H1Z" fill="#FFF"/></svg><span class="t" style="left:21px;top:2px;letter-spacing:-0.07px">Ridwan (Maasland)</span></div><div style="left:501px;width:130px"><span class="t" style="left:1px;top:3px;letter-spacing:0.12px;">Weerwoord</span></div><div style="left:633px;width:97px"><span class="t" style="left:1px;top:3px;">19.3</span></div><div style="left:732px;width:32px"><svg style="left:1px;top:6px" width="11" height="7" viewBox="0 0 11 7"><path d="M0 3.5L4 0V3H7V0L11 3.5L7 7V4H4V7Z" fill="#FF7F0E"/></svg></div><div style="left:766px;width:85px"><span class="t" style="left:1px;top:3px;">42</span></div><div style="left:853px;width:32px"></div><div style="left:887px;width:43px"><span class="t" style="left:1px;top:3px;">227</span></div><div style="left:932px;width:32px"></div><div style="left:966px;width:53px"><span class="t" style="left:1px;top:3px;">265.2</span></div><div style="left:1021px;width:75px"></div></div>
<div class="r" style="top:619px;height:18px"><div style="left:3px;width:32px"><span class="t" style="left:1px;top:3px;">21</span></div><div style="left:37px;width:53px"><svg style="left:1px;top:2px" width="7" height="11" viewBox="0 0 7 11"><path d="M3.5 11L7 7H4V0H3V7H0Z" fill="#FF0000"/></svg><span class="t" style="left:11px;top:3px">(-4)</span></div><div style="left:92px;width:160px"><span class="t" style="left:1px;top:3px">96</span></div><div style="left:254px;width:244px"><svg style="left:1px;top:4px" width="11" height="11" viewBox="0 0 11 11"><rect width="11" height="11" fill="#0000FF"/><path d="M1 1H10V3H7V8H10V10H1V8H4V3H1Z" fill="#FFF"/></svg><span class="t" style="left:21px;top:2px;letter-spacing:-0.07px">Erwin (Zelhem, Gld)</span></div><div style="left:501px;width:130px"><span class="t" style="left:1px;top:3px;letter-spacing:0.12px;">Weerwoord</span></div><div style="left:633px;width:97px"><span class="t" style="left:1px;top:3px;">18.0</span></div><div style="left:732px;width:32px"><svg style="left:1px;top:6px" width="11" height="7" viewBox="0 0 11 7"><path d="M0 3.5L4 0V3H7V0L11 3.5L7 7V4H4V7Z" fill="#FF7F0E"/></svg></div><div style="left:766px;width:85px"><span class="t" style="left:1px;top:3px;">40</span></div><div style="left:853px;width:32px"></div><div style="left:887px;width:43px"><span class="t" style="left:1px;top:3px;">210</span></div><div style="left:932px;width:32px"></div><div style="left:966px;width:53px"><span class="t" style="left:1px;top:3px;">265.1</span></div><div style="left:1021px;width:75px"></div></div>
<div class="r" style="top:639px;height:18px"><div style="left:3px;width:32px"><span class="t" style="left:1px;top:4px;">22</span></div><div style="left:37px;width:53px"><svg style="left:1px;top:3px" width="7" height="11" viewBox="0 0 7 11"><path d="M3.5 0L7 4H4V11H3V4H0Z" fill="#00FF00"/></svg><span class="t" style="left:11px;top:4px">(+8)</span></div><div style="left:92px;width:160px"><span class="t" style="left:1px;top:4px">242</span></div><div style="left:254px;width:244px"><svg style="left:1px;top:4px" width="11" height="11" viewBox="0 0 11 11"><rect width="11" height="11" fill="#0000FF"/><path d="M1 1H10V3H7V8H10V10H1V8H4V3H1Z" fill="#FFF"/></svg><span class="t" style="left:21px;top:2px;letter-spacing:-0.07px">Maarten (Arnhem)</span></div><div style="left:501px;width:130px"><span class="t" style="left:1px;top:4px;letter-spacing:0.12px;">Weeronline</span></div><div style="left:633px;width:97px"><span class="t" style="left:1px;top:4px;">18.9</span></div><div style="left:732px;width:32px"><svg style="left:1px;top:7px" width="11" height="7" viewBox="0 0 11 7"><path d="M0 3.5L4 0V3H7V0L11 3.5L7 7V4H4V7Z" fill="#FF7F0E"/></svg></div><div style="left:766px;width:85px"><span class="t" style="left:1px;top:4px;">50</span></div><div style="left:853px;width:32px"></div><div style="left:887px;width:43px"><span class="t" style="left:1px;top:4px;">210</span></div><div style="left:932px;width:32px"></div><div style="left:966px;width:53px"><span class="t" style="left:1px;top:4px;">264.9</span></div><div style="left:1021px;width:75px"></div></div>
<div class="r" style="top:660px;height:18px"><div style="left:3px;width:32px"><span class="t" style="left:1px;top:3px;">23</span></div><div style="left:37px;width:53px"><svg style="left:1px;top:2px" width="7" height="11" viewBox="0 0 7 11"><path d="M3.5 0L7 4H4V11H3V4H0Z" fill="#00FF00"/></svg><span class="t" style="left:11px;top:3px">(+10)</span></div><div style="left:92px;width:160px"><span class="t" style="left:1px;top:3px">106</span></div><div style="left:254px;width:244px"><svg style="left:1px;top:4px" width="11" height="11" viewBox="0 0 11 11"><rect width="11" height="11" fill="#0000FF"/><path d="M1 1H10V3H7V8H10V10H1V8H4V3H1Z" fill="#FFF"/></svg><span class="t" style="left:21px;top:2px;letter-spacing:-0.07px">Toon Dijkmans (Retie)</span></div><div style="left:501px;width:130px"><span class="t" style="left:1px;top:3px;letter-spacing:0.12px;">Weerwoord</span></div><div style="left:633px;width:97px"><span class="t" style="left:1px;top:3px;">18.7</span></div><div style="left:732px;width:32px"><svg style="left:1px;top:6px" width="11" height="7" viewBox="0 0 11 7"><path d="M0 3.5L4 0V3H7V0L11 3.5L7 7V4H4V7Z" fill="#FF7F0E"/></svg></div><div style="left:766px;width:85px"><span class="t" style="left:1px;top:3px;">65</span></div><div style="left:853px;width:32px"></div><div style="left:887px;width:43px"><span class="t" style="left:1px;top:3px;">220</span></div><div style="left:932px;width:32px"></div><div style="left:966px;width:53px"><span class="t" style="left:1px;top:3px;">264.2</span></div><div style="left:1021px;width:75px"></div></div>
<div class="r" style="top:680px;height:18px"><div style="left:3px;width:32px"><span class="t" style="left:1px;top:4px;">24</span></div><div style="left:37px;width:53px"><svg style="left:1px;top:3px" width="7" height="11" viewBox="0 0 7 11"><path d="M3.5 11L7 7H4V0H3V7H0Z" fill="#FF0000"/></svg><span class="t" style="left:11px;top:4px">(-2)</span></div><div style="left:92px;width:160px"><span class="t" style="left:1px;top:4px">140</span></div><div style="left:254px;width:244px"><svg style="left:1px;top:4px" width="11" height="11" viewBox="0 0 11 11"><rect width="11" height="11" fill="#0000FF"/><path d="M1 1H10V3H7V8H10V10H1V8H4V3H1Z" fill="#FFF"/></svg><span class="t" style="left:21px;top:2px;letter-spacing:-0.07px">Jesper Steenbergen (Annen)</span></div><div style="left:501px;width:130px"><span class="t" style="left:1px;top:4px;letter-spacing:0.12px;">Weeronline</span></div><div style="left:633px;width:97px"><span class="t" style="left:1px;top:4px;">18.8</span></div><div style="left:732px;width:32px"><svg style="left:1px;top:7px" width="11" height="7" viewBox="0 0 11 7"><path d="M0 3.5L4 0V3H7V0L11 3.5L7 7V4H4V7Z" fill="#FF7F0E"/></svg></div><div style="left:766px;width:85px"><span class="t" style="left:1px;top:4px;">59</span></div><div style="left:853px;width:32px"></div><div style="left:887px;width:43px"><span class="t" style="left:1px;top:4px;">228</span></div><div style="left:932px;width:32px"></div><div style="left:966px;width:53px"><span class="t" style="left:1px;top:4px;">263.9</span></div><div style="left:1021px;width:75px"></div></div>
<div class="r" style="top:701px;height:18px"><div style="left:3px;width:32px"><span class="t" style="left:1px;top:3px;">25</span></div><div style="left:37px;width:53px"><svg style="left:1px;top:2px" width="7" height="11" viewBox="0 0 7 11"><path d="M3.5 11L7 7H4V0H3V7H0Z" fill="#FF0000"/></svg><span class="t" style="left:11px;top:3px">(-1)</span></div><div style="left:92px;width:160px"><span class="t" style="left:1px;top:3px">26</span></div><div style="left:254px;width:244px"><svg style="left:1px;top:4px" width="11" height="11" viewBox="0 0 11 11"><rect width="11" height="11" fill="#0000FF"/><path d="M1 1H10V3H7V8H10V10H1V8H4V3H1Z" fill="#FFF"/></svg><span class="t" style="left:21px;top:2px;letter-spacing:-0.07px">Stefan (Hellevoetsluis)</span></div><div style="left:501px;width:130px"><span class="t" style="left:1px;top:3px;letter-spacing:0.12px;">Weerwoord</span></div><div style="left:633px;width:97px"><span class="t" style="left:1px;top:3px;">18.3</span></div><div style="left:732px;width:32px"><svg style="left:1px;top:6px" width="11" height="7" viewBox="0 0 11 7"><path d="M0 3.5L4 0V3H7V0L11 3.5L7 7V4H4V7Z" fill="#FF7F0E"/></svg></div><div style="left:766px;width:85px"><span class="t" style="left:1px;top:3px;">55</span></div><div style="left:853px;width:32px"></div><div style="left:887px;width:43px"><span class="t" style="left:1px;top:3px;">210</span></div><div style="left:932px;width:32px"></div><div style="left:966px;width:53px"><span class="t" style="left:1px;top:3px;">260.3</span></div><div style="left:1021px;width:75px"></div></div>
<div class="r" style="top:721px;height:18px"><div style="left:3px;width:32px"><span class="t" style="left:1px;top:4px;">26</span></div><div style="left:37px;width:53px"></div><div style="left:92px;width:160px"><span class="t" style="left:1px;top:4px">75</span></div><div style="left:254px;width:244px"><svg style="left:1px;top:4px" width="11" height="11" viewBox="0 0 11 11"><rect width="11" height="11" fill="#0000FF"/><path d="M1 1H10V3H7V8H10V10H1V8H4V3H1Z" fill="#FFF"/></svg><span class="t" style="left:21px;top:2px;letter-spacing:-0.07px">Jef (Tilburg)</span></div><div style="left:501px;width:130px"><span class="t" style="left:1px;top:4px;letter-spacing:0.12px;">Weerwoord</span></div><div style="left:633px;width:97px"><span class="t" style="left:1px;top:4px;">18.2</span></div><div style="left:732px;width:32px"><svg style="left:1px;top:7px" width="11" height="7" viewBox="0 0 11 7"><path d="M0 3.5L4 0V3H7V0L11 3.5L7 7V4H4V7Z" fill="#FF7F0E"/></svg></div><div style="left:766px;width:85px"><span class="t" style="left:1px;top:4px;">45</span></div><div style="left:853px;width:32px"></div><div style="left:887px;width:43px"><span class="t" style="left:1px;top:4px;">201</span></div><div style="left:932px;width:32px"></div><div style="left:966px;width:53px"><span class="t" style="left:1px;top:4px;">260</span></div><div style="left:1021px;width:75px"></div></div>
<div class="r" style="top:742px;height:18px"><div style="left:3px;width:32px"><span class="t" style="left:1px;top:3px;">27</span></div><div style="left:37px;width:53px"><svg style="left:1px;top:2px" width="7" height="11" viewBox="0 0 7 11"><path d="M3.5 0L7 4H4V11H3V4H0Z" fill="#00FF00"/></svg><span class="t" style="left:11px;top:3px">(+15)</span></div><div style="left:92px;width:160px"><span class="t" style="left:1px;top:3px">153</span></div><div style="left:254px;width:244px"><svg style="left:1px;top:4px" width="11" height="11" viewBox="0 0 11 11"><rect width="11" height="11" fill="#0000FF"/><path d="M1 1H10V3H7V8H10V10H1V8H4V3H1Z" fill="#FFF"/></svg><span class="t" style="left:21px;top:2px;letter-spacing:-0.07px">Yorick (Hilversum)</span></div><div style="left:501px;width:130px"><span class="t" style="left:1px;top:3px;letter-spacing:0.12px;">Weerwoord</span></div><div style="left:633px;width:97px"><span class="t" style="left:1px;top:3px;">19.0</span></div><div style="left:732px;width:32px"><svg style="left:1px;top:6px" width="11" height="7" viewBox="0 0 11 7"><path d="M0 3.5L4 0V3H7V0L11 3.5L7 7V4H4V7Z" fill="#FF7F0E"/></svg></div><div style="left:766px;width:85px"><span class="t" style="left:1px;top:3px;">60</span></div><div style="left:853px;width:32px"></div><div style="left:887px;width:43px"><span class="t" style="left:1px;top:3px;">220</span></div><div style="left:932px;width:32px"></div><div style="left:966px;width:53px"><span class="t" style="left:1px;top:3px;">259.8</span></div><div style="left:1021px;width:75px"></div></div>
<div class="r" style="top:762px;height:18px"><div style="left:3px;width:32px"><span class="t" style="left:1px;top:4px;">28</span></div><div style="left:37px;width:53px"><svg style="left:1px;top:3px" width="7" height="11" viewBox="0 0 7 11"><path d="M3.5 0L7 4H4V11H3V4H0Z" fill="#00FF00"/></svg><span class="t" style="left:11px;top:4px">(+16)</span></div><div style="left:92px;width:160px"><span class="t" style="left:1px;top:4px">188</span></div><div style="left:254px;width:244px"><svg style="left:1px;top:4px" width="11" height="11" viewBox="0 0 11 11"><rect width="11" height="11" fill="#0000FF"/><path d="M1 1H10V3H7V8H10V10H1V8H4V3H1Z" fill="#FFF"/></svg><span class="t" style="left:21px;top:2px;letter-spacing:-0.07px">Frans (Udenhout)</span></div><div style="left:501px;width:130px"><span class="t" style="left:1px;top:4px;letter-spacing:0.12px;">Weerwoord</span></div><div style="left:633px;width:97px"><span class="t" style="left:1px;top:4px;">19.2</span></div><div style="left:732px;width:32px"><svg style="left:1px;top:7px" width="11" height="7" viewBox="0 0 11 7"><path d="M0 3.5L4 0V3H7V0L11 3.5L7 7V4H4V7Z" fill="#FF7F0E"/></svg></div><div style="left:766px;width:85px"><span class="t" style="left:1px;top:4px;">38</span></div><div style="left:853px;width:32px"></div><div style="left:887px;width:43px"><span class="t" style="left:1px;top:4px;">200</span></div><div style="left:932px;width:32px"></div><div style="left:966px;width:53px"><span class="t" style="left:1px;top:4px;">259.7</span></div><div style="left:1021px;width:75px"></div></div>
<div class="r" style="top:783px;height:18px"><div style="left:3px;width:32px"><span class="t" style="left:1px;top:3px;">28</span></div><div style="left:37px;width:53px"><svg style="left:1px;top:2px" width="7" height="11" viewBox="0 0 7 11"><path d="M3.5 0L7 4H4V11H3V4H0Z" fill="#00FF00"/></svg><span class="t" style="left:11px;top:3px">(+23)</span></div><div style="left:92px;width:160px"><span class="t" style="left:1px;top:3px">144</span></div><div style="left:254px;width:244px"><svg style="left:1px;top:4px" width="11" height="11" viewBox="0 0 11 11"><rect width="11" height="11" fill="#0000FF"/><path d="M1 1H10V3H7V8H10V10H1V8H4V3H1Z" fill="#FFF"/></svg><span class="t" style="left:21px;top:2px;letter-spacing:-0.07px">Kay (Den Burg, Texel)</span></div><div style="left:501px;width:130px"><span class="t" style="left:1px;top:3px;letter-spacing:0.12px;">Weeronline</span></div><div style="left:633px;width:97px"><span class="t" style="left:1px;top:3px;">19.6</span></div><div style="left:732px;width:32px"><svg style="left:1px;top:6px" width="11" height="7" viewBox="0 0 11 7"><path d="M0 3.5L4 0V3H7V0L11 3.5L7 7V4H4V7Z" fill="#FF7F0E"/></svg></div><div style="left:766px;width:85px"><span class="t" style="left:1px;top:3px;">30</span></div><div style="left:853px;width:32px"></div><div style="left:887px;width:43px"><span class="t" style="left:1px;top:3px;">209</span></div><div style="left:932px;width:32px"></div><div style="left:966px;width:53px"><span class="t" style="left:1px;top:3px;">259.7</span></div><div style="left:1021px;width:75px"></div></div>
<div class="r" style="top:803px;height:18px"><div style="left:3px;width:32px"><span class="t" style="left:1px;top:3px;">30</span></div><div style="left:37px;width:53px"><svg style="left:1px;top:2px" width="7" height="11" viewBox="0 0 7 11"><path d="M3.5 11L7 7H4V0H3V7H0Z" fill="#FF0000"/></svg><span class="t" style="left:11px;top:3px">(-3)</span></div><div style="left:92px;width:160px"><span class="t" style="left:1px;top:3px">15</span></div><div style="left:254px;width:244px"><svg style="left:1px;top:4px" width="11" height="11" viewBox="0 0 11 11"><rect width="11" height="11" fill="#0000FF"/><path d="M1 1H10V3H7V8H10V10H1V8H4V3H1Z" fill="#FFF"/></svg><span class="t" style="left:21px;top:2px;letter-spacing:-0.07px">Matthijs (Leiden)</span></div><div style="left:501px;width:130px"><span class="t" style="left:1px;top:3px;letter-spacing:0.12px;">Weerwoord</span></div><div style="left:633px;width:97px"><span class="t" style="left:1px;top:3px;">18.5</span></div><div style="left:732px;width:32px"><svg style="left:1px;top:6px" width="11" height="7" viewBox="0 0 11 7"><path d="M0 3.5L4 0V3H7V0L11 3.5L7 7V4H4V7Z" fill="#FF7F0E"/></svg></div><div style="left:766px;width:85px"><span class="t" style="left:1px;top:3px;">77</span></div><div style="left:853px;width:32px"></div><div style="left:887px;width:43px"><span class="t" style="left:1px;top:3px;"><span class="gr">222</span></span></div><div style="left:932px;width:32px"></div><div style="left:966px;width:53px"><span class="t" style="left:1px;top:3px;">259.6</span></div><div style="left:1021px;width:75px"><span class="t" style="left:1px;top:3px;">(254.6 <span class="rd">+ 5</span>)</span></div></div>
<div class="r" style="top:824px;height:19px"><div style="left:3px;width:32px"><span class="t" style="left:1px;top:4px;">31</span></div><div style="left:37px;width:53px"><svg style="left:1px;top:3px" width="7" height="11" viewBox="0 0 7 11"><path d="M3.5 11L7 7H4V0H3V7H0Z" fill="#FF0000"/></svg><span class="t" style="left:11px;top:4px">(-2)</span></div><div style="left:92px;width:160px"><span class="t" style="left:1px;top:6px">39</span><svg style="left:22px;top:1px" width="9" height="15" viewBox="0 0 9 15" shape-rendering="crispEdges"><rect x="0" y="0" width="9" height="1" fill="#000"/><rect x="1" y="1" width="1" height="1" fill="#000"/><rect x="2" y="1" width="1" height="1" fill="#FFF"/><rect x="3" y="1" width="3" height="1" fill="#FFD400"/><rect x="6" y="1" width="1" height="1" fill="#FFF"/><rect x="7" y="1" width="1" height="1" fill="#000"/><rect x="1" y="2" width="1" height="1" fill="#000"/><rect x="2" y="2" width="1" height="1" fill="#FFF"/><rect x="3" y="2" width="3" height="1" fill="#FFD400"/><rect x="6" y="2" width="1" height="1" fill="#FFF"/><rect x="7" y="2" width="1" height="1" fill="#000"/><rect x="1" y="3" width="1" height="1" fill="#000"/><rect x="2" y="3" width="1" height="1" fill="#FFF"/><rect x="3" y="3" width="3" height="1" fill="#FFD400"/><rect x="6" y="3" width="1" height="1" fill="#FFF"/><rect x="7" y="3" width="1" height="1" fill="#000"/><rect x="2" y="4" width="1" height="1" fill="#000"/><rect x="3" y="4" width="3" height="1" fill="#FFD400"/><rect x="6" y="4" width="1" height="1" fill="#000"/><rect x="3" y="5" width="3" height="1" fill="#000"/><rect x="2" y="6" width="5" height="1" fill="#000"/><rect x="1" y="7" width="1" height="1" fill="#000"/><rect x="2" y="7" width="1" height="1" fill="#FFF"/><rect x="3" y="7" width="3" height="1" fill="#E3A85C"/><rect x="6" y="7" width="1" height="1" fill="#C88A3C"/><rect x="7" y="7" width="1" height="1" fill="#000"/><rect x="0" y="8" width="1" height="1" fill="#000"/><rect x="1" y="8" width="1" height="1" fill="#FFF"/><rect x="2" y="8" width="5" height="1" fill="#E3A85C"/><rect x="7" y="8" width="1" height="1" fill="#C88A3C"/><rect x="8" y="8" width="1" height="1" fill="#000"/><rect x="0" y="9" width="1" height="1" fill="#000"/><rect x="1" y="9" width="6" height="1" fill="#E3A85C"/><rect x="7" y="9" width="1" height="1" fill="#C88A3C"/><rect x="8" y="9" width="1" height="1" fill="#000"/><rect x="0" y="10" width="1" height="1" fill="#000"/><rect x="1" y="10" width="6" height="1" fill="#E3A85C"/><rect x="7" y="10" width="1" height="1" fill="#C88A3C"/><rect x="8" y="10" width="1" height="1" fill="#000"/><rect x="0" y="11" width="1" height="1" fill="#000"/><rect x="1" y="11" width="5" height="1" fill="#E3A85C"/><rect x="6" y="11" width="2" height="1" fill="#C88A3C"/><rect x="8" y="11" width="1" height="1" fill="#000"/><rect x="0" y="12" width="1" height="1" fill="#000"/><rect x="1" y="12" width="4" height="1" fill="#E3A85C"/><rect x="5" y="12" width="3" height="1" fill="#C88A3C"/><rect x="8" y="12" width="1" height="1" fill="#000"/><rect x="1" y="13" width="1" height="1" fill="#000"/><rect x="2" y="13" width="5" height="1" fill="#C88A3C"/><rect x="7" y="13" width="1" height="1" fill="#000"/><rect x="2" y="14" width="5" height="1" fill="#000"/><text x="4.6" y="12.6" font-size="6.4" font-weight="bold" text-anchor="middle" font-family="Liberation Sans,sans-serif" fill="#000" style="text-rendering:geometricPrecision">3</text></svg></div><div style="left:254px;width:244px"><svg style="left:1px;top:4px" width="11" height="11" viewBox="0 0 11 11"><rect width="11" height="11" fill="#0000FF"/><path d="M1 1H10V3H7V8H10V10H1V8H4V3H1Z" fill="#FFF"/></svg><span class="t" style="left:21px;top:2px;letter-spacing:-0.07px">Marc (St-Truiden)</span></div><div style="left:501px;width:130px"><span class="t" style="left:1px;top:4px;letter-spacing:0.12px;">Weerwoord</span></div><div style="left:633px;width:97px"><span class="t" style="left:1px;top:4px;">18.1</span></div><div style="left:732px;width:32px"><svg style="left:1px;top:7px" width="11" height="7" viewBox="0 0 11 7"><path d="M0 3.5L4 0V3H7V0L11 3.5L7 7V4H4V7Z" fill="#FF7F0E"/></svg></div><div style="left:766px;width:85px"><span class="t" style="left:1px;top:4px;">51</span></div><div style="left:853px;width:32px"></div><div style="left:887px;width:43px"><span class="t" style="left:1px;top:4px;">212</span></div><div style="left:932px;width:32px"></div><div style="left:966px;width:53px"><span class="t" style="left:1px;top:4px;">259.4</span></div><div style="left:1021px;width:75px"></div></div>
<div class="r" style="top:846px;height:18px"><div style="left:3px;width:32px"><span class="t" style="left:1px;top:2px;">32</span></div><div style="left:37px;width:53px"><svg style="left:1px;top:1px" width="7" height="11" viewBox="0 0 7 11"><path d="M3.5 0L7 4H4V11H3V4H0Z" fill="#00FF00"/></svg><span class="t" style="left:11px;top:2px">(+14)</span></div><div style="left:92px;width:160px"><span class="t" style="left:1px;top:2px">84</span></div><div style="left:254px;width:244px"><svg style="left:1px;top:4px" width="11" height="11" viewBox="0 0 11 11"><rect width="11" height="11" fill="#0000FF"/><path d="M1 1H10V3H7V8H10V10H1V8H4V3H1Z" fill="#FFF"/></svg><span class="t" style="left:21px;top:2px;letter-spacing:-0.07px">Marcel (Dinxperlo)</span></div><div style="left:501px;width:130px"><span class="t" style="left:1px;top:2px;letter-spacing:0.12px;">Weerwoord</span></div><div style="left:633px;width:97px"><span class="t" style="left:1px;top:2px;">18.3</span></div><div style="left:732px;width:32px"><svg style="left:1px;top:5px" width="11" height="7" viewBox="0 0 11 7"><path d="M0 3.5L4 0V3H7V0L11 3.5L7 7V4H4V7Z" fill="#FF7F0E"/></svg></div><div style="left:766px;width:85px"><span class="t" style="left:1px;top:2px;">72</span></div><div style="left:853px;width:32px"></div><div style="left:887px;width:43px"><span class="t" style="left:1px;top:2px;"><span class="gr">222</span></span></div><div style="left:932px;width:32px"></div><div style="left:966px;width:53px"><span class="t" style="left:1px;top:2px;">258.2</span></div><div style="left:1021px;width:75px"><span class="t" style="left:1px;top:2px;">(253.2 <span class="rd">+ 5</span>)</span></div></div>
<div class="r" style="top:866px;height:18px"><div style="left:3px;width:32px"><span class="t" style="left:1px;top:4px;">32</span></div><div style="left:37px;width:53px"><svg style="left:1px;top:3px" width="7" height="11" viewBox="0 0 7 11"><path d="M3.5 0L7 4H4V11H3V4H0Z" fill="#00FF00"/></svg><span class="t" style="left:11px;top:4px">(+16)</span></div><div style="left:92px;width:160px"><span class="t" style="left:1px;top:4px">999 / nieuw</span></div><div style="left:254px;width:244px"><svg style="left:1px;top:4px" width="11" height="11" viewBox="0 0 11 11"><rect width="11" height="11" fill="#0000FF"/><path d="M1 1H10V3H7V8H10V10H1V8H4V3H1Z" fill="#FFF"/></svg><span class="t" style="left:21px;top:2px;letter-spacing:-0.07px">Jordi (Ruurlo)</span></div><div style="left:501px;width:130px"><span class="t" style="left:1px;top:4px;letter-spacing:0.12px;">Weerwoord</span></div><div style="left:633px;width:97px"><span class="t" style="left:1px;top:4px;"><span class="gr">18.6</span></span></div><div style="left:732px;width:32px"><svg style="left:1px;top:7px" width="11" height="7" viewBox="0 0 11 7"><path d="M0 3.5L4 0V3H7V0L11 3.5L7 7V4H4V7Z" fill="#FF7F0E"/></svg></div><div style="left:766px;width:85px"><span class="t" style="left:1px;top:4px;">60</span></div><div style="left:853px;width:32px"></div><div style="left:887px;width:43px"><span class="t" style="left:1px;top:4px;">250</span></div><div style="left:932px;width:32px"></div><div style="left:966px;width:53px"><span class="t" style="left:1px;top:4px;">258.2</span></div><div style="left:1021px;width:75px"><span class="t" style="left:1px;top:4px;">(253.2 <span class="rd">+ 5</span>)</span></div></div>
<div class="r" style="top:887px;height:18px"><div style="left:3px;width:32px"><span class="t" style="left:1px;top:3px;">34</span></div><div style="left:37px;width:53px"><svg style="left:1px;top:2px" width="7" height="11" viewBox="0 0 7 11"><path d="M3.5 0L7 4H4V11H3V4H0Z" fill="#00FF00"/></svg><span class="t" style="left:11px;top:3px">(+1)</span></div><div style="left:92px;width:160px"><span class="t" style="left:1px;top:3px">135</span></div><div style="left:254px;width:244px"><svg style="left:1px;top:4px" width="11" height="11" viewBox="0 0 11 11"><rect width="11" height="11" fill="#0000FF"/><path d="M1 1H10V3H7V8H10V10H1V8H4V3H1Z" fill="#FFF"/></svg><span class="t" style="left:21px;top:2px;letter-spacing:-0.07px">Kristof (Drongen)</span></div><div style="left:501px;width:130px"><span class="t" style="left:1px;top:3px;letter-spacing:0.12px;">Weerwoord</span></div><div style="left:633px;width:97px"><span class="t" style="left:1px;top:3px;">18.2</span></div><div style="left:732px;width:32px"><svg style="left:1px;top:6px" width="11" height="7" viewBox="0 0 11 7"><path d="M0 3.5L4 0V3H7V0L11 3.5L7 7V4H4V7Z" fill="#FF7F0E"/></svg></div><div style="left:766px;width:85px"><span class="t" style="left:1px;top:3px;">48</span></div><div style="left:853px;width:32px"></div><div style="left:887px;width:43px"><span class="t" style="left:1px;top:3px;">202</span></div><div style="left:932px;width:32px"></div><div style="left:966px;width:53px"><span class="t" style="left:1px;top:3px;">258</span></div><div style="left:1021px;width:75px"></div></div>
<div class="r" style="top:907px;height:18px"><div style="left:3px;width:32px"><span class="t" style="left:1px;top:4px;">35</span></div><div style="left:37px;width:53px"><svg style="left:1px;top:3px" width="7" height="11" viewBox="0 0 7 11"><path d="M3.5 0L7 4H4V11H3V4H0Z" fill="#00FF00"/></svg><span class="t" style="left:11px;top:4px">(+26)</span></div><div style="left:92px;width:160px"><span class="t" style="left:1px;top:4px">163</span></div><div style="left:254px;width:244px"><svg style="left:1px;top:4px" width="11" height="11" viewBox="0 0 11 11"><rect width="11" height="11" fill="#0000FF"/><path d="M1 1H10V3H7V8H10V10H1V8H4V3H1Z" fill="#FFF"/></svg><span class="t" style="left:21px;top:2px;letter-spacing:-0.07px">Youri (Zoetermeer)</span></div><div style="left:501px;width:130px"><span class="t" style="left:1px;top:4px;letter-spacing:0.12px;">Weerwoord</span></div><div style="left:633px;width:97px"><span class="t" style="left:1px;top:4px;"><span class="gr">18.6</span></span></div><div style="left:732px;width:32px"><svg style="left:1px;top:7px" width="11" height="7" viewBox="0 0 11 7"><path d="M0 3.5L4 0V3H7V0L11 3.5L7 7V4H4V7Z" fill="#FF7F0E"/></svg></div><div style="left:766px;width:85px"><span class="t" style="left:1px;top:4px;">65</span></div><div style="left:853px;width:32px"></div><div style="left:887px;width:43px"><span class="t" style="left:1px;top:4px;">200</span></div><div style="left:932px;width:32px"></div><div style="left:966px;width:53px"><span class="t" style="left:1px;top:4px;">257.9</span></div><div style="left:1021px;width:75px"><span class="t" style="left:1px;top:4px;">(252.9 <span class="rd">+ 5</span>)</span></div></div>
<div class="r" style="top:928px;height:18px"><div style="left:3px;width:32px"><span class="t" style="left:1px;top:3px;">36</span></div><div style="left:37px;width:53px"><svg style="left:1px;top:2px" width="7" height="11" viewBox="0 0 7 11"><path d="M3.5 11L7 7H4V0H3V7H0Z" fill="#FF0000"/></svg><span class="t" style="left:11px;top:3px">(-15)</span></div><div style="left:92px;width:160px"><span class="t" style="left:1px;top:3px">133</span></div><div style="left:254px;width:244px"><svg style="left:1px;top:4px" width="11" height="11" viewBox="0 0 11 11"><rect width="11" height="11" fill="#0000FF"/><path d="M1 1H10V3H7V8H10V10H1V8H4V3H1Z" fill="#FFF"/></svg><span class="t" style="left:21px;top:2px;letter-spacing:-0.07px">Dick (Zoetermeer)</span></div><div style="left:501px;width:130px"><span class="t" style="left:1px;top:3px;letter-spacing:0.12px;">Weerwoord</span></div><div style="left:633px;width:97px"><span class="t" style="left:1px;top:3px;">18.5</span></div><div style="left:732px;width:32px"><svg style="left:1px;top:6px" width="11" height="7" viewBox="0 0 11 7"><path d="M0 3.5L4 0V3H7V0L11 3.5L7 7V4H4V7Z" fill="#FF7F0E"/></svg></div><div style="left:766px;width:85px"><span class="t" style="left:1px;top:3px;">66</span></div><div style="left:853px;width:32px"></div><div style="left:887px;width:43px"><span class="t" style="left:1px;top:3px;">212</span></div><div style="left:932px;width:32px"></div><div style="left:966px;width:53px"><span class="t" style="left:1px;top:3px;">257.6</span></div><div style="left:1021px;width:75px"></div></div>
<div class="r" style="top:948px;height:18px"><div style="left:3px;width:32px"><span class="t" style="left:1px;top:3px;">37</span></div><div style="left:37px;width:53px"><svg style="left:1px;top:2px" width="7" height="11" viewBox="0 0 7 11"><path d="M3.5 11L7 7H4V0H3V7H0Z" fill="#FF0000"/></svg><span class="t" style="left:11px;top:3px">(-14)</span></div><div style="left:92px;width:160px"><span class="t" style="left:1px;top:3px">999 / nieuw</span></div><div style="left:254px;width:244px"><svg style="left:1px;top:4px" width="11" height="11" viewBox="0 0 11 11"><rect width="11" height="11" fill="#0000FF"/><path d="M1 1H10V3H7V8H10V10H1V8H4V3H1Z" fill="#FFF"/></svg><span class="t" style="left:21px;top:2px;letter-spacing:-0.07px">Olivier (Amsterdam)</span></div><div style="left:501px;width:130px"><span class="t" style="left:1px;top:3px;letter-spacing:0.12px;">Weerwoord</span></div><div style="left:633px;width:97px"><span class="t" style="left:1px;top:3px;">18.4</span></div><div style="left:732px;width:32px"><svg style="left:1px;top:6px" width="11" height="7" viewBox="0 0 11 7"><path d="M0 3.5L4 0V3H7V0L11 3.5L7 7V4H4V7Z" fill="#FF7F0E"/></svg></div><div style="left:766px;width:85px"><span class="t" style="left:1px;top:3px;">68</span></div><div style="left:853px;width:32px"></div><div style="left:887px;width:43px"><span class="t" style="left:1px;top:3px;">226</span></div><div style="left:932px;width:32px"></div><div style="left:966px;width:53px"><span class="t" style="left:1px;top:3px;">257</span></div><div style="left:1021px;width:75px"></div></div>
<div class="r" style="top:969px;height:18px"><div style="left:3px;width:32px"><span class="t" style="left:1px;top:3px;">38</span></div><div style="left:37px;width:53px"></div><div style="left:92px;width:160px"><span class="t" style="left:1px;top:3px">191</span></div><div style="left:254px;width:244px"><svg style="left:1px;top:4px" width="11" height="11" viewBox="0 0 11 11"><rect width="11" height="11" fill="#0000FF"/><path d="M1 1H10V3H7V8H10V10H1V8H4V3H1Z" fill="#FFF"/></svg><span class="t" style="left:21px;top:2px;letter-spacing:-0.07px">Lucas (Eindhoven)</span></div><div style="left:501px;width:130px"><span class="t" style="left:1px;top:3px;letter-spacing:0.12px;">Weerwoord</span></div><div style="left:633px;width:97px"><span class="t" style="left:1px;top:3px;">18.2</span></div><div style="left:732px;width:32px"><svg style="left:1px;top:6px" width="11" height="7" viewBox="0 0 11 7"><path d="M0 3.5L4 0V3H7V0L11 3.5L7 7V4H4V7Z" fill="#FF7F0E"/></svg></div><div style="left:766px;width:85px"><span class="t" style="left:1px;top:3px;">50</span></div><div style="left:853px;width:32px"></div><div style="left:887px;width:43px"><span class="t" style="left:1px;top:3px;">203</span></div><div style="left:932px;width:32px"></div><div style="left:966px;width:53px"><span class="t" style="left:1px;top:3px;">256.8</span></div><div style="left:1021px;width:75px"></div></div>
<div class="r" style="top:989px;height:18px"><div style="left:3px;width:32px"><span class="t" style="left:1px;top:3px;">39</span></div><div style="left:37px;width:53px"></div><div style="left:92px;width:160px"><span class="t" style="left:1px;top:3px">117</span></div><div style="left:254px;width:244px"><svg style="left:1px;top:4px" width="11" height="11" viewBox="0 0 11 11"><rect width="11" height="11" fill="#0000FF"/><path d="M1 1H10V3H7V8H10V10H1V8H4V3H1Z" fill="#FFF"/></svg><span class="t" style="left:21px;top:2px;letter-spacing:-0.07px">Alexander (Juberri - Andorra)</span></div><div style="left:501px;width:130px"><span class="t" style="left:1px;top:3px;letter-spacing:0.12px;">Weerwoord</span></div><div style="left:633px;width:97px"><span class="t" style="left:1px;top:3px;">18.3</span></div><div style="left:732px;width:32px"><svg style="left:1px;top:6px" width="11" height="7" viewBox="0 0 11 7"><path d="M0 3.5L4 0V3H7V0L11 3.5L7 7V4H4V7Z" fill="#FF7F0E"/></svg></div><div style="left:766px;width:85px"><span class="t" style="left:1px;top:3px;">52</span></div><div style="left:853px;width:32px"></div><div style="left:887px;width:43px"><span class="t" style="left:1px;top:3px;">201</span></div><div style="left:932px;width:32px"></div><div style="left:966px;width:53px"><span class="t" style="left:1px;top:3px;">256.6</span></div><div style="left:1021px;width:75px"></div></div>
<div class="r" style="top:1010px;height:19px"><div style="left:3px;width:32px"><span class="t" style="left:1px;top:3px;">40</span></div><div style="left:37px;width:53px"><svg style="left:1px;top:2px" width="7" height="11" viewBox="0 0 7 11"><path d="M3.5 0L7 4H4V11H3V4H0Z" fill="#00FF00"/></svg><span class="t" style="left:11px;top:3px">(+14)</span></div><div style="left:92px;width:160px"><span class="t" style="left:1px;top:6px">35</span><svg style="left:22px;top:1px" width="9" height="15" viewBox="0 0 9 15" shape-rendering="crispEdges"><rect x="0" y="0" width="9" height="1" fill="#000"/><rect x="1" y="1" width="1" height="1" fill="#000"/><rect x="2" y="1" width="1" height="1" fill="#FFF"/><rect x="3" y="1" width="3" height="1" fill="#0A28E6"/><rect x="6" y="1" width="1" height="1" fill="#FFF"/><rect x="7" y="1" width="1" height="1" fill="#000"/><rect x="1" y="2" width="1" height="1" fill="#000"/><rect x="2" y="2" width="1" height="1" fill="#FFF"/><rect x="3" y="2" width="3" height="1" fill="#0A28E6"/><rect x="6" y="2" width="1" height="1" fill="#FFF"/><rect x="7" y="2" width="1" height="1" fill="#000"/><rect x="1" y="3" width="1" height="1" fill="#000"/><rect x="2" y="3" width="1" height="1" fill="#FFF"/><rect x="3" y="3" width="3" height="1" fill="#0A28E6"/><rect x="6" y="3" width="1" height="1" fill="#FFF"/><rect x="7" y="3" width="1" height="1" fill="#000"/><rect x="2" y="4" width="1" height="1" fill="#000"/><rect x="3" y="4" width="3" height="1" fill="#0A28E6"/><rect x="6" y="4" width="1" height="1" fill="#000"/><rect x="3" y="5" width="3" height="1" fill="#000"/><rect x="2" y="6" width="5" height="1" fill="#000"/><rect x="1" y="7" width="1" height="1" fill="#000"/><rect x="2" y="7" width="1" height="1" fill="#FFF"/><rect x="3" y="7" width="3" height="1" fill="#FFDC00"/><rect x="6" y="7" width="1" height="1" fill="#E6A800"/><rect x="7" y="7" width="1" height="1" fill="#000"/><rect x="0" y="8" width="1" height="1" fill="#000"/><rect x="1" y="8" width="1" height="1" fill="#FFF"/><rect x="2" y="8" width="5" height="1" fill="#FFDC00"/><rect x="7" y="8" width="1" height="1" fill="#E6A800"/><rect x="8" y="8" width="1" height="1" fill="#000"/><rect x="0" y="9" width="1" height="1" fill="#000"/><rect x="1" y="9" width="6" height="1" fill="#FFDC00"/><rect x="7" y="9" width="1" height="1" fill="#E6A800"/><rect x="8" y="9" width="1" height="1" fill="#000"/><rect x="0" y="10" width="1" height="1" fill="#000"/><rect x="1" y="10" width="6" height="1" fill="#FFDC00"/><rect x="7" y="10" width="1" height="1" fill="#E6A800"/><rect x="8" y="10" width="1" height="1" fill="#000"/><rect x="0" y="11" width="1" height="1" fill="#000"/><rect x="1" y="11" width="5" height="1" fill="#FFDC00"/><rect x="6" y="11" width="2" height="1" fill="#E6A800"/><rect x="8" y="11" width="1" height="1" fill="#000"/><rect x="0" y="12" width="1" height="1" fill="#000"/><rect x="1" y="12" width="4" height="1" fill="#FFDC00"/><rect x="5" y="12" width="3" height="1" fill="#E6A800"/><rect x="8" y="12" width="1" height="1" fill="#000"/><rect x="1" y="13" width="1" height="1" fill="#000"/><rect x="2" y="13" width="5" height="1" fill="#E6A800"/><rect x="7" y="13" width="1" height="1" fill="#000"/><rect x="2" y="14" width="5" height="1" fill="#000"/><text x="4.6" y="12.6" font-size="6.4" font-weight="bold" text-anchor="middle" font-family="Liberation Sans,sans-serif" fill="#000" style="text-rendering:geometricPrecision">1</text></svg></div><div style="left:254px;width:244px"><svg style="left:1px;top:4px" width="11" height="11" viewBox="0 0 11 11"><rect width="11" height="11" fill="#0000FF"/><path d="M1 1H10V3H7V8H10V10H1V8H4V3H1Z" fill="#FFF"/></svg><span class="t" style="left:21px;top:2px;letter-spacing:-0.07px">Bert (Apeldoorn)</span></div><div style="left:501px;width:130px"><span class="t" style="left:1px;top:3px;letter-spacing:0.12px;">Weerwoord</span></div><div style="left:633px;width:97px"><span class="t" style="left:1px;top:3px;">18.8</span></div><div style="left:732px;width:32px"><svg style="left:1px;top:6px" width="11" height="7" viewBox="0 0 11 7"><path d="M0 3.5L4 0V3H7V0L11 3.5L7 7V4H4V7Z" fill="#FF7F0E"/></svg></div><div style="left:766px;width:85px"><span class="t" style="left:1px;top:3px;">65</span></div><div style="left:853px;width:32px"></div><div style="left:887px;width:43px"><span class="t" style="left:1px;top:3px;">212</span></div><div style="left:932px;width:32px"></div><div style="left:966px;width:53px"><span class="t" style="left:1px;top:3px;">255.5</span></div><div style="left:1021px;width:75px"></div></div>
</div></body></html>
